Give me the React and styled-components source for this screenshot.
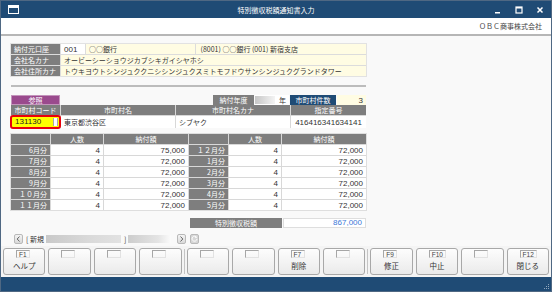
import React from 'react'
import styled, { createGlobalStyle } from 'styled-components'

const GlobalStyle = createGlobalStyle`
  html, body {
    margin: 0;
    padding: 0;
    background: #fff;
  }
  body {
    font-family: 'Noto Sans CJK JP', 'Liberation Sans', sans-serif;
    font-size: 7px;
    color: #333;
  }
  * {
    box-sizing: border-box;
  }
`

const bankRows = [
    { label: '会社名カナ', value: 'オービーシーショウジカブシキガイシヤホシ' },
    { label: '会社住所カナ', value: 'トウキヨウトシンジュククニシシンジュクスミトモフドウサンシンジュクグランドタワー' },
]

const months = [
    ['6月分', 4, '75,000', '１２月分', 4, '72,000'],
    ['7月分', 4, '72,000', '1月分', 4, '72,000'],
    ['8月分', 4, '72,000', '2月分', 4, '72,000'],
    ['9月分', 4, '72,000', '3月分', 4, '72,000'],
    ['１０月分', 4, '72,000', '4月分', 4, '72,000'],
    ['１１月分', 4, '72,000', '5月分', 4, '72,000'],
]

const fkeys = [
    [['F1', 'ヘルプ'], [], [], []],
    [[], [], ['F7', '削除'], []],
    [['F9', '修正'], ['F10', '中止'], [], ['F12', '閉じる']],
]

const App = () => (
    <>
        <GlobalStyle />
        <Window>
            <TitleBar>
                <AppIcon width="11" height="9" viewBox="0 0 11 9">
                    <rect x="0.5" y="0.5" width="10" height="8" fill="none" stroke="#fff" />
                    <rect x="0.5" y="0.5" width="10" height="2.5" fill="#fff" />
                </AppIcon>
                <Title>特別徴収税額通知書入力</Title>
                <Controls>
                    <svg width="8" height="8" viewBox="0 0 8 8">
                        <rect x="1" y="6" width="5" height="1.5" fill="#fff" />
                    </svg>
                    <svg width="8" height="8" viewBox="0 0 8 8">
                        <rect x="1" y="1" width="6" height="6" fill="none" stroke="#fff" strokeWidth="1.2" />
                        <rect x="1" y="1" width="6" height="1.5" fill="#fff" />
                    </svg>
                    <svg width="8" height="8" viewBox="0 0 8 8">
                        <path d="M1.5 1.5 L6.5 6.5 M6.5 1.5 L1.5 6.5" stroke="#fff" strokeWidth="1.5" />
                    </svg>
                </Controls>
            </TitleBar>
            <CompanyBar>ＯＢＣ商事株式会社</CompanyBar>

            <Body>
                <Content>
                    <BankGrid>
                        <Label>納付元口座</Label>
                        <Cell $num>001</Cell>
                        <Cell $tone="cream">○○銀行</Cell>
                        <Cell $tone="cream">&nbsp;(8001) ○○銀行 (001) 新宿支店</Cell>
                        {bankRows.map(row => (
                            <React.Fragment key={row.label}>
                                <Label>{row.label}</Label>
                                <Cell $tone="cream" $span={3}>{row.value}</Cell>
                            </React.Fragment>
                        ))}
                    </BankGrid>

                    <Divider />

                    <TopRow>
                        <RefButton>参照</RefButton>
                        <YearGroup>
                            <Label $align="center" $w={41}>納付年度</Label>
                            <YearBox>
                                <YearFill />
                                <span>年</span>
                            </YearBox>
                            <Label $align="center" $w={46} $blue>市町村件数</Label>
                            <Cell $tone="cream" $align="right" $num $w={29}>3</Cell>
                        </YearGroup>
                    </TopRow>

                    <CodeGrid>
                        <Label $align="center">市町村コード</Label>
                        <Label $align="center">市町村名</Label>
                        <Label $align="center">市町村名カナ</Label>
                        <Label $align="center">指定番号</Label>
                        <CodeCell>131130</CodeCell>
                        <Cell>東京都渋谷区</Cell>
                        <Cell>シブヤク</Cell>
                        <Cell $num $align="center">416416341634141</Cell>
                    </CodeGrid>

                    <MonthGrid>
                        <Label />
                        <Label $align="center">人数</Label>
                        <Label $align="center">納付額</Label>
                        <Label />
                        <Label $align="center">人数</Label>
                        <Label $align="center">納付額</Label>
                        {months.map(m => (
                            <React.Fragment key={m[0]}>
                                <Label $align="right">{m[0]}</Label>
                                <Cell $num $align="right">{m[1]}</Cell>
                                <Cell $num $align="right">{m[2]}</Cell>
                                <Label $align="right">{m[3]}</Label>
                                <Cell $num $align="right">{m[4]}</Cell>
                                <Cell $num $align="right">{m[5]}</Cell>
                            </React.Fragment>
                        ))}
                    </MonthGrid>

                    <TotalRow>
                        <Label $align="center" $w={92}>特別徴収税額</Label>
                        <TotalValue>867,000</TotalValue>
                    </TotalRow>

                    <NavRow>
                        <NavButton>
                            <svg width="5" height="6" viewBox="0 0 5 6">
                                <path d="M3.5 0.5 L1.2 3 L3.5 5.5" fill="none" stroke="#666" strokeWidth="1" />
                            </svg>
                        </NavButton>
                        <NavText>[ 新規</NavText>
                        <NavBar $w={75} />
                        <NavText>]</NavText>
                        <NavBar $w={43} $fade />
                        <NavButton $gap={6}>
                            <svg width="5" height="6" viewBox="0 0 5 6">
                                <path d="M1.5 0.5 L3.8 3 L1.5 5.5" fill="none" stroke="#666" strokeWidth="1" />
                            </svg>
                        </NavButton>
                        <NavButton $gap={4} $off>
                            <svg width="7" height="7" viewBox="0 0 7 7">
                                <path d="M5.6 2.3 A2.5 2.5 0 1 0 6 4" fill="none" stroke="#fff" strokeWidth="1" />
                                <path d="M4.6 1 L6 2.6 L4 3" fill="#fff" />
                            </svg>
                        </NavButton>
                    </NavRow>
                </Content>
            </Body>

            <FKeyBar>
                {fkeys.map((group, gi) => (
                    <React.Fragment key={gi}>
                        {gi > 0 && <KeySep />}
                        <KeyGroup>
                            {group.map(([key, text], ki) => (
                                <FKey key={ki}>
                                    <KeyTag>{key}</KeyTag>
                                    <KeyText>{text}</KeyText>
                                </FKey>
                            ))}
                        </KeyGroup>
                    </React.Fragment>
                ))}
            </FKeyBar>

            <StatusBar>
                <Grip width="8" height="8" viewBox="0 0 8 8">
                    <rect x="6" y="2" width="1" height="1" fill="#8fa6bd" />
                    <rect x="4" y="4" width="1" height="1" fill="#8fa6bd" />
                    <rect x="6" y="4" width="1" height="1" fill="#8fa6bd" />
                    <rect x="2" y="6" width="1" height="1" fill="#8fa6bd" />
                    <rect x="4" y="6" width="1" height="1" fill="#8fa6bd" />
                    <rect x="6" y="6" width="1" height="1" fill="#8fa6bd" />
                </Grip>
            </StatusBar>
        </Window>
    </>
)

const Window = styled.div`
    width: 552px;
    height: 292px;
    display: flex;
    flex-direction: column;
    border: 1px solid #4f6883;
    background: #f9f9f9;
    overflow: hidden;
`

const TitleBar = styled.div`
    flex: none;
    height: 17px;
    background: #1f4b75;
    color: #fff;
    display: grid;
    grid-template-columns: 1fr auto 1fr;
    align-items: center;
    padding: 0 7px 0 7px;
`

const AppIcon = styled.svg`
    display: block;
`

const Title = styled.div`
    font-size: 7px;
    line-height: 10px;
`

const Controls = styled.div`
    display: flex;
    justify-content: flex-end;
    align-items: center;
    gap: 13px;
`

const CompanyBar = styled.div`
    flex: none;
    height: 18px;
    background: #fff;
    border-bottom: 2px solid #b6b6b6;
    display: flex;
    align-items: center;
    justify-content: flex-end;
    padding-right: 9px;
    font-size: 7px;
    color: #444;
`

const Body = styled.div`
    flex: 1;
    padding: 8px 0 0 10px;
    background: #f9f9f9;
`

const Content = styled.div`
    width: 355px;
`

const Label = styled.div`
    background: #7e7e7e;
    color: #fff;
    height: 100%;
    line-height: 10px;
    padding: 0 3px;
    white-space: nowrap;
    overflow: hidden;
    text-align: ${p => p.$align || 'left'};
    ${p => p.$w && `width: ${p.$w}px; flex: none;`}
    ${p => p.$blue && `background: #1f4b75;`}
`

const Cell = styled.div`
    background: ${p => (p.$tone === 'cream' ? '#fffce3' : '#fff')};
    color: #333;
    height: 100%;
    display: flex;
    align-items: center;
    justify-content: ${p => ({ right: 'flex-end', center: 'center' }[p.$align] || 'flex-start')};
    padding: 0 3px;
    white-space: nowrap;
    overflow: hidden;
    font-family: ${p => (p.$num ? "'Liberation Sans', 'Noto Sans CJK JP', sans-serif" : 'inherit')};
    font-size: ${p => (p.$num ? '8px' : '7px')};
    ${p => p.$span && `grid-column: span ${p.$span};`}
    ${p => p.$w && `width: ${p.$w}px; flex: none;`}
`

const BankGrid = styled.div`
    display: grid;
    grid-template-columns: 49px 24px 109px 1fr;
    grid-auto-rows: 10px;
    gap: 1px;
    background: #dcdcdc;
    outline: 1px solid #e2e2e2;
`

const Divider = styled.div`
    height: 2px;
    margin-top: 9px;
    background: #bcbcbc;
`

const TopRow = styled.div`
    display: flex;
    align-items: stretch;
    height: 10px;
    margin-top: 8px;
`

const RefButton = styled.div`
    width: 49px;
    background: #9a4a8d;
    border: 1px solid #c394bb;
    color: #fff;
    text-align: center;
    line-height: 8px;
`

const YearGroup = styled.div`
    margin-left: auto;
    display: flex;
    gap: 1px;
`

const YearBox = styled.div`
    width: 34px;
    background: #fff;
    display: flex;
    align-items: center;
    gap: 4px;
    line-height: 10px;
    padding-right: 3px;
`

const YearFill = styled.div`
    flex: 1;
    height: 8px;
    background: linear-gradient(to right, #c6c6c6, #f4f4f4);
`

const CodeGrid = styled.div`
    display: grid;
    grid-template-columns: 49px 114px 114px 1fr;
    grid-template-rows: 10px 12px;
    gap: 1px;
    background: #d8d8d8;
`

const CodeCell = styled.div`
    position: relative;
    margin: -1px;
    background: #ffff00;
    border: 2px solid #e8000b;
    border-radius: 3px;
    font-family: 'Liberation Sans', sans-serif;
    font-size: 8px;
    line-height: 10px;
    padding-left: 3px;
    color: #222;

    &::after {
        content: '';
        position: absolute;
        right: 1px;
        top: 1px;
        bottom: 1px;
        width: 3px;
        background: #fff;
        border-left: 1px solid #a8a8a8;
        border-right: 1px solid #a8a8a8;
    }
`

const MonthGrid = styled.div`
    display: grid;
    grid-template-columns: 39px 52px 84px 39px 52px 1fr;
    grid-auto-rows: 10px;
    gap: 1px;
    margin-top: 6px;
    background: #d8d8d8;
    outline: 1px solid #dedede;
`

const TotalRow = styled.div`
    display: flex;
    justify-content: flex-end;
    gap: 1px;
    height: 10px;
    margin-top: 8px;
`

const TotalValue = styled.div`
    width: 83px;
    background: #fff;
    border: 1px solid #dedede;
    color: #3d78d8;
    font-family: 'Liberation Sans', sans-serif;
    font-size: 8px;
    line-height: 8px;
    text-align: right;
    padding-right: 3px;
`

const NavRow = styled.div`
    display: flex;
    align-items: center;
    height: 11px;
    margin-top: 5px;
    padding-left: 3px;
`

const NavButton = styled.div`
    width: 9px;
    height: 10px;
    margin-left: ${p => p.$gap || 0}px;
    border: 1px solid #b9b9b9;
    border-radius: 2px;
    background: ${p => (p.$off ? '#d6d6d6' : 'linear-gradient(#f4f4f4, #d9d9d9)')};
    display: flex;
    align-items: center;
    justify-content: center;
`

const NavText = styled.span`
    margin: 0 2px 0 3px;
    font-size: 7px;
    color: #333;
    white-space: pre;
`

const NavBar = styled.div`
    width: ${p => p.$w}px;
    height: 8px;
    background: ${p => (p.$fade
        ? 'linear-gradient(to right, #cdcdcd, #e4e4e4 70%, #fbfbfb)'
        : 'linear-gradient(to right, #c9c9c9, #dadada 60%, #e2e2e2)')};
`

const FKeyBar = styled.div`
    flex: none;
    height: 31px;
    display: flex;
    padding: 2px 2px 2px 2px;
    background: #f4f4f4;
`

const KeyGroup = styled.div`
    flex: 1;
    display: flex;
    gap: 3px;
`

const KeySep = styled.div`
    width: 1px;
    margin: 1px 2px;
    background: #c4c4c4;
`

const FKey = styled.div`
    flex: 1;
    border: 1px solid #a8a8a8;
    border-radius: 3px;
    background: linear-gradient(#fdfdfd, #eaeaea);
    display: flex;
    flex-direction: column;
    align-items: center;
    padding-top: 1px;
`

const KeyTag = styled.div`
    align-self: flex-start;
    margin-left: 12px;
    min-width: 14px;
    height: 8px;
    padding: 0 2px;
    border-top: 1px solid #a6a6a6;
    border-left: 1px solid #a6a6a6;
    border-right: 1px solid #e2e2e2;
    border-bottom: 1px solid #e2e2e2;
    font-family: 'Liberation Sans', sans-serif;
    font-size: 6.5px;
    line-height: 7px;
    color: #444;
`

const KeyText = styled.div`
    margin-top: 3px;
    font-size: 7.5px;
    line-height: 10px;
    color: #333;
`

const StatusBar = styled.div`
    flex: none;
    height: 14px;
    background: #1f4b75;
    display: flex;
    justify-content: flex-end;
    align-items: flex-end;
    padding: 0 1px 1px 0;
`

const Grip = styled.svg`
    display: block;
`

export default App
